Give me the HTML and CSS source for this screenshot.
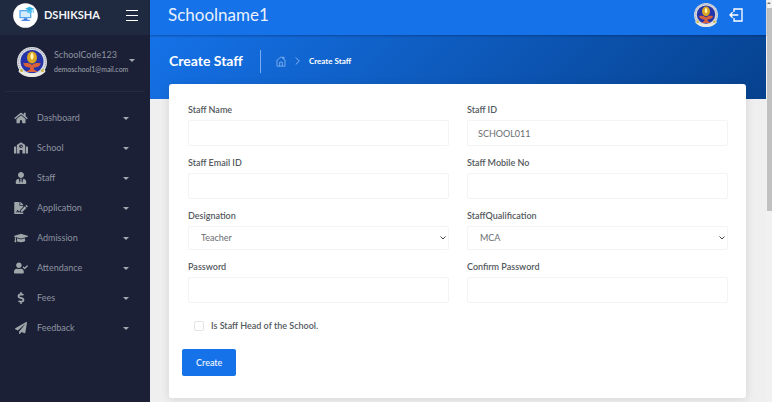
FILE: index.html
```html
<!DOCTYPE html>
<html lang="en">
<head>
<meta charset="utf-8">
<meta name="viewport" content="width=device-width, initial-scale=1">
<title>Create Staff</title>
<link rel="stylesheet" href="styles.css">
</head>
<body>
<svg class="defs" aria-hidden="true">
  <symbol id="emblem" viewBox="0 0 60 60">
    <circle cx="30" cy="30" r="30" fill="#d9dbe0"/>
    <circle cx="30" cy="30" r="27" fill="none" stroke="#8a8fa8" stroke-width="2" stroke-dasharray="2 2"/>
    <circle cx="30" cy="29" r="23" fill="#2434a8"/>
    <ellipse cx="30" cy="21" rx="10" ry="12" fill="#d9a520"/>
    <path d="M30 11c5 6 4 12 0 15-4-3-5-9 0-15z" fill="#fff6b0"/>
    <path d="M12 33c7-2 13-1 18 3 5-4 11-5 18-3-3 6-8 8-14 8v4l8 5H18l8-5v-4c-6 0-11-2-14-8z" fill="#d8603a"/>
    <path d="M5 43c6 8 14 10 25 10s19-2 25-10l2 6c-7 8-15 11-27 11S10 57 3 49z" fill="#e9e9e2"/>
    <circle cx="9" cy="47" r="3" fill="#c9b63c"/>
    <circle cx="51" cy="47" r="3" fill="#c9b63c"/>
  </symbol>
</svg>
<div class="app">
  <aside class="sidebar">
    <div class="brand">
      <svg class="brand-logo" viewBox="0 0 75 75" aria-hidden="true">
        <circle cx="37.500" cy="37.500" r="37" fill="#fff"/>
        <rect x="19" y="21" width="36" height="25" rx="2" fill="#58a8f0"/>
        <rect x="23" y="25" width="28" height="17" fill="#d5ecff"/>
        <path d="M33 46h9l2 6H31z" fill="#3b74d8"/>
        <rect x="25" y="50" width="26" height="4" rx="2" fill="#4a86e8"/>
        <path d="M36 17l14-6 14 6-14 6z" fill="#35b4ea"/>
        <path d="M42 21v7c5 4 11 4 16 0v-7l-8 4z" fill="#55c6f2"/>
        <path d="M61 19v11" stroke="#35b4ea" stroke-width="2"/>
      </svg>
      <span class="brand-name">DSHIKSHA</span>
      <button class="menu-toggle" type="button" aria-label="Toggle menu"><span></span><span></span><span></span></button>
    </div>
    <div class="profile">
      <svg class="profile-photo" aria-hidden="true"><use href="#emblem"/></svg>
      <div class="profile-text">
        <div class="profile-name"><span>SchoolCode123</span><i class="caret"></i></div>
        <div class="profile-mail">demoschool1@mail.com</div>
      </div>
    </div>
    <nav class="nav">
      <a href="#"><svg viewBox="0 0 576 512"><path d="M280.370 148.260L96 300.110V464a16 16 0 0 0 16 16l112.060-.29a16 16 0 0 0 15.920-16V368a16 16 0 0 1 16-16h64a16 16 0 0 1 16 16v95.640a16 16 0 0 0 16 16.050L464 480a16 16 0 0 0 16-16V300L295.670 148.260a12.190 12.190 0 0 0-15.300 0zM571.600 251.470L488 182.560V44.050a12 12 0 0 0-12-12h-56a12 12 0 0 0-12 12v72.610L318.470 43a48 48 0 0 0-61 0L4.340 251.470a12 12 0 0 0-1.600 16.900l25.500 31A12 12 0 0 0 45.150 301l235.220-193.740a12.190 12.190 0 0 1 15.300 0L530.900 301a12 12 0 0 0 16.900-1.600l25.500-31a12 12 0 0 0-1.700-16.930z"/></svg><span>Dashboard</span><i class="caret"></i></a>
      <a href="#"><svg viewBox="0 0 640 512"><path d="M0 224v272c0 8.840 7.160 16 16 16h80V192H32c-17.670 0-32 14.330-32 32zm360-48h-24v-40c0-4.420-3.580-8-8-8h-16c-4.420 0-8 3.580-8 8v64c0 4.420 3.580 8 8 8h48c4.420 0 8-3.580 8-8v-16c0-4.420-3.580-8-8-8zm137.750-63.960l-160-106.670a32.020 32.020 0 0 0-35.500 0l-160 106.670A32 32 0 0 0 128 138.660V512h128V368c0-8.840 7.160-16 16-16h96c8.840 0 16 7.160 16 16v144h128V138.670c0-10.700-5.350-20.700-14.250-26.630zM320 256c-44.180 0-80-35.820-80-80s35.820-80 80-80 80 35.820 80 80-35.820 80-80 80zm288-64h-64v320h80c8.840 0 16-7.160 16-16V224c0-17.670-14.330-32-32-32z"/></svg><span>School</span><i class="caret"></i></a>
      <a href="#"><svg viewBox="0 0 448 512"><path d="M224 256c70.700 0 128-57.300 128-128S294.700 0 224 0 96 57.300 96 128s57.300 128 128 128zm95.800 32.600L272 480l-32-136 32-56h-96l32 56-32 136-47.800-191.400C56.900 292 0 350.300 0 422.400V464c0 26.500 21.500 48 48 48h352c26.500 0 48-21.500 48-48v-41.600c0-72.100-56.900-130.400-128.200-133.800z"/></svg><span>Staff</span><i class="caret"></i></a>
      <a href="#"><svg viewBox="0 0 576 512"><path d="M218.170 424.140c-2.950-5.920-8.090-6.520-10.170-6.520s-7.220.59-10.020 6.190l-7.670 15.340c-6.370 12.780-25.030 11.370-29.480-2.090L144 386.590l-10.610 31.880c-5.890 17.660-22.380 29.530-41 29.530H80c-8.840 0-16-7.160-16-16s7.160-16 16-16h12.390c4.830 0 9.110-3.080 10.640-7.660l18.190-54.640c3.300-9.810 12.440-16.410 22.780-16.410s19.480 6.590 22.770 16.410l13.880 41.640c19.750-16.190 54.060-9.700 66 14.160 1.890 3.780 5.490 5.950 9.360 6.260v-82.120l128-127.090V160H248c-13.200 0-24-10.800-24-24V0H24C10.700 0 0 10.700 0 24v464c0 13.300 10.700 24 24 24h336c13.300 0 24-10.700 24-24v-40l-128-.11c-16.120-.31-30.580-9.280-37.830-23.750zM384 121.900c0-6.300-2.500-12.400-7-16.900L279.100 7c-4.500-4.500-10.600-7-17-7H256v128h128v-6.100zm-96 225.060V416h68.990l161.680-162.780-67.880-67.880L288 346.960zm280.540-179.630l-31.870-31.870c-9.940-9.940-26.070-9.940-36.010 0l-27.250 27.250 67.880 67.880 27.250-27.250c9.950-9.940 9.950-26.070 0-36.010z"/></svg><span>Application</span><i class="caret"></i></a>
      <a href="#"><svg viewBox="0 0 640 512"><path d="M622.340 153.200L343.400 67.500c-15.200-4.670-31.600-4.670-46.790 0L17.660 153.200c-23.540 7.230-23.540 38.360 0 45.590l48.630 14.940c-10.670 13.190-17.230 29.280-17.880 46.900C38.780 266.150 32 276.110 32 288c0 10.780 5.680 19.850 13.860 25.650L20.330 428.530C18.110 438.520 25.710 448 35.940 448h56.110c10.240 0 17.840-9.480 15.620-19.470L82.140 313.650C90.320 307.850 96 298.780 96 288c0-11.570-6.470-21.250-15.660-26.870.76-15.020 8.440-28.300 20.690-36.720L296.600 284.500c9.060 2.780 26.440 6.250 46.790 0l278.950-85.700c23.550-7.240 23.550-38.360 0-45.600zM352.790 315.090c-28.530 8.760-52.840 3.920-65.590 0l-145.020-44.550L128 384c0 35.350 85.960 64 192 64s192-28.650 192-64l-14.180-113.470-145.030 44.560z"/></svg><span>Admission</span><i class="caret"></i></a>
      <a href="#"><svg viewBox="0 0 640 512"><path d="M224 256c70.700 0 128-57.300 128-128S294.700 0 224 0 96 57.300 96 128s57.300 128 128 128zm89.600 32h-16.700c-22.200 10.200-46.900 16-72.900 16s-50.600-5.800-72.900-16h-16.700C60.200 288 0 348.200 0 422.400V464c0 26.500 21.500 48 48 48h352c26.500 0 48-21.500 48-48v-41.600c0-74.200-60.200-134.400-134.400-134.400zm323-128.400l-27.800-28.100c-4.600-4.700-12.100-4.700-16.800-.1l-104.800 104-45.500-45.800c-4.600-4.700-12.100-4.700-16.800-.1l-28.100 27.900c-4.700 4.600-4.700 12.100-.1 16.800l81.700 82.300c4.600 4.700 12.100 4.700 16.800.1l141.300-140.200c4.600-4.700 4.700-12.200.1-16.800z"/></svg><span>Attendance</span><i class="caret"></i></a>
      <a href="#"><svg viewBox="0 0 288 512"><path d="M209.200 233.400l-108-31.600C88.700 198.200 80 186.500 80 173.500c0-16.300 13.200-29.500 29.500-29.500h66.300c12.200 0 24.200 3.700 34.200 10.500 6.100 4.100 14.300 3.100 19.500-2l34.800-34c7.100-6.900 6.100-18.400-1.800-24.500C238 74.800 207.400 64.100 176 64V16c0-8.800-7.200-16-16-16h-32c-8.800 0-16 7.200-16 16v48h-2.500C45.800 64-5.400 118.700.5 183.600c4.200 46.100 39.400 83.600 83.800 96.600l102.500 30c12.500 3.700 21.200 15.300 21.200 28.300 0 16.300-13.200 29.500-29.500 29.500h-66.300C100 368 88 364.300 78 357.500c-6.100-4.100-14.300-3.100-19.500 2l-34.800 34c-7.100 6.900-6.100 18.400 1.800 24.500 24.500 19.200 55.100 29.900 86.500 30v48c0 8.800 7.200 16 16 16h32c8.800 0 16-7.200 16-16v-48.200c46.600-.9 90.300-28.600 105.700-72.700 21.500-61.600-14.600-124.800-72.500-141.700z"/></svg><span>Fees</span><i class="caret"></i></a>
      <a href="#"><svg viewBox="0 0 512 512"><path d="M476 3.200L12.500 270.600c-18.100 10.400-15.800 35.600 2.200 43.200L121 358.400l287.300-253.200c5.500-4.900 13.300 2.600 8.600 8.300L176 407v80.500c0 23.600 28.500 32.900 42.500 15.800L282 426l124.600 52.200c14.200 6 30.400-2.900 33-18.200l72-432C515 7.800 493.300-6.800 476 3.200z"/></svg><span>Feedback</span><i class="caret"></i></a>
    </nav>
  </aside>

  <div class="page">
    <header class="topbar">
      <span class="school-name">Schoolname1</span>
      <svg class="account" aria-hidden="true"><use href="#emblem"/></svg>
      <button class="logout" type="button" aria-label="Log out">
        <svg viewBox="0 0 42 42" fill="none" stroke="#fff" stroke-width="4"><path d="M15 12V3h24v36H15v-9M28 21H4M11 13l-8 8 8 8"/></svg>
      </button>
    </header>
    <div class="banner">
      <h1>Create Staff</h1>
      <nav class="crumbs" aria-label="Breadcrumb">
        <a href="#" aria-label="Home"><svg viewBox="0 0 30 32" fill="none" stroke="#a3c8f8" stroke-width="2"><path d="M3 13v17h24V13M1 14L15 2l14 12M24 9V3h-4v3M11 30V18h8v12"/></svg></a>
        <svg class="sep" viewBox="0 0 14 22" fill="none" stroke="#b9d6fa" stroke-width="2"><path d="M2 1l10 10L2 21"/></svg>
        <span>Create Staff</span>
      </nav>
    </div>
    <main>
      <form class="card">
        <div class="fields">
          <div class="field"><label for="name">Staff Name</label><input id="name" type="text"></div>
          <div class="field"><label for="sid">Staff ID</label><input id="sid" type="text" value="SCHOOL011"></div>
          <div class="field"><label for="mail">Staff Email ID</label><input id="mail" type="email"></div>
          <div class="field"><label for="mobile">Staff Mobile No</label><input id="mobile" type="tel"></div>
          <div class="field"><label for="role">Designation</label><select id="role"><option>Teacher</option></select></div>
          <div class="field"><label for="qual">StaffQualification</label><select id="qual"><option>MCA</option></select></div>
          <div class="field"><label for="pw">Password</label><input id="pw" type="password"></div>
          <div class="field"><label for="pw2">Confirm Password</label><input id="pw2" type="password"></div>
        </div>
        <div class="check"><input id="head" type="checkbox"><label for="head">Is Staff Head of the School.</label></div>
        <button class="submit" type="submit">Create</button>
      </form>
    </main>
  </div>
  <div class="scrollbar" aria-hidden="true"><span class="scroll-up"></span><span class="thumb"></span></div>
</div>
</body>
</html>
```
FILE: styles.css
```css
* { box-sizing: border-box; }

body {
  margin: 0;
  font-family: Lato, "Liberation Sans", sans-serif;
  font-size: 9px;
  line-height: 12px;
  color: #54595e;
  background: #efefef;
}

a { color: inherit; text-decoration: none; }
button, input, select { font: inherit; color: inherit; }
svg { display: block; flex: none; }
.defs { display: none; }

.app { display: flex; min-height: 100vh; }

/* Sidebar */
.sidebar {
  flex: none;
  width: 150px;
  background: #1b2037;
  color: #8d939f;
}

.brand {
  display: flex;
  align-items: center;
  height: 35px;
  padding: 0 12px 5px 13px;
  background: #1f2940;
}
.brand-logo { width: 25px; height: 25px; }
.brand-name {
  flex: 1;
  margin-left: 6px;
  font-size: 11px;
  font-weight: 700;
  color: #f2f4f7;
}
.menu-toggle {
  display: flex;
  flex-direction: column;
  gap: 4px;
  width: 12px;
  padding: 0;
  border: 0;
  background: none;
}
.menu-toggle span { height: 1px; background: #fff; }

.profile {
  display: flex;
  align-items: center;
  gap: 7px;
  height: 57px;
  margin: 0 5px;
  padding: 0 10px 2px 12px;
  border-bottom: 1px solid #242a42;
}
.profile-photo { width: 30px; height: 30px; }
.profile-text { flex: 1; min-width: 0; white-space: nowrap; }
.profile-name {
  display: flex;
  align-items: flex-end;
  justify-content: space-between;
  font-size: 9px;
  line-height: 14px;
}
.profile-mail { font-size: 7px; line-height: 14px; color: #a0a5ae; }

.caret {
  flex: none;
  border: 3px solid transparent;
  border-top-color: #a4a9b1;
  border-bottom: 0;
}

.nav { padding-top: 11px; }
.nav a {
  display: flex;
  align-items: center;
  height: 30px;
  padding: 0 21px 0 14px;
}
.nav svg { width: 14px; height: 12px; fill: #a0a5aa; }
.nav span { flex: 1; margin-left: 9px; }

/* Header */
.page { flex: 1; min-width: 0; }
.topbar {
  position: relative;
  display: flex;
  align-items: center;
  height: 35px;
  padding: 0 23px 5px 18px;
  background: #1572e8;
  box-shadow: 0 1px 2px rgba(0, 20, 70, .35);
}
.school-name { flex: 1; font-size: 17px; line-height: 22px; color: #e8f1fd; }
.account { width: 24px; height: 24px; }
.logout {
  margin-left: 11px;
  padding: 0;
  border: 0;
  background: none;
}
.logout svg { width: 14px; height: 14px; }

.banner {
  display: flex;
  align-items: center;
  height: 64px;
  padding: 0 19px 12px;
  color: #fff;
  background: linear-gradient(135deg, #1572e8, #06418e);
}
.banner h1 { margin: 0; font-size: 14px; line-height: 18px; font-weight: 700; }
.crumbs {
  display: flex;
  align-items: center;
  gap: 9px;
  height: 23px;
  margin-left: 17px;
  padding-left: 15px;
  border-left: 1px solid #78aef2;
  font-size: 8px;
  font-weight: 700;
}
.crumbs a svg { width: 10px; height: 11px; }
.crumbs .sep { width: 5px; height: 8px; }

/* Form card */
main { padding: 0 20px 4px 19px; }
.card {
  position: relative;
  margin-top: -15px;
  padding: 20px 18px 22px 19px;
  border-radius: 3px;
  background: #fff;
  box-shadow: 0 1px 8px rgba(60, 60, 60, .14);
}
.fields {
  display: grid;
  grid-template-columns: 1fr 1fr;
  gap: 11px 18px;
}
.field { display: flex; flex-direction: column; gap: 4px; }
label { font-weight: 600; }
.field input, .field select {
  width: 100%;
  height: 26px;
  padding: 0 10px;
  border: 1px solid #f4f4f5;
  border-radius: 2px;
  background: #fff;
  color: #686d72;
}
.field select {
  appearance: none;
  height: 24px;
  padding: 0 12px;
  background: #fff url("data:image/svg+xml,%3Csvg xmlns='http://www.w3.org/2000/svg' viewBox='0 0 12 8' fill='none' stroke='%23444' stroke-width='2'%3E%3Cpath d='M1 1l5 5 5-5'/%3E%3C/svg%3E") no-repeat right 2px center / 6px 4px;
}

.check {
  display: flex;
  align-items: center;
  gap: 7px;
  margin: 17px 0 17px 6px;
}
.check input {
  appearance: none;
  width: 10px;
  height: 10px;
  margin: 0;
  border: 1px solid #e4e4e6;
  border-radius: 2px;
}

.submit {
  display: block;
  height: 27px;
  margin-left: -6px;
  padding: 0 14px;
  border: 0;
  border-radius: 2px;
  background: #1572e8;
  color: #e8f1fd;
  font-weight: 600;
}

/* Page scrollbar */
.scrollbar {
  flex: none;
  width: 6px;
  background: #f1f1f1;
}
.scroll-up {
  display: block;
  width: 4px;
  height: 8px;
  margin: 0 auto;
}
.scroll-up::before {
  content: "";
  display: block;
  border: 2px solid transparent;
  border-bottom-color: #777;
}
.thumb {
  display: block;
  height: 203px;
  margin-left: 1px;
  background: #c1c1c1;
}
```
